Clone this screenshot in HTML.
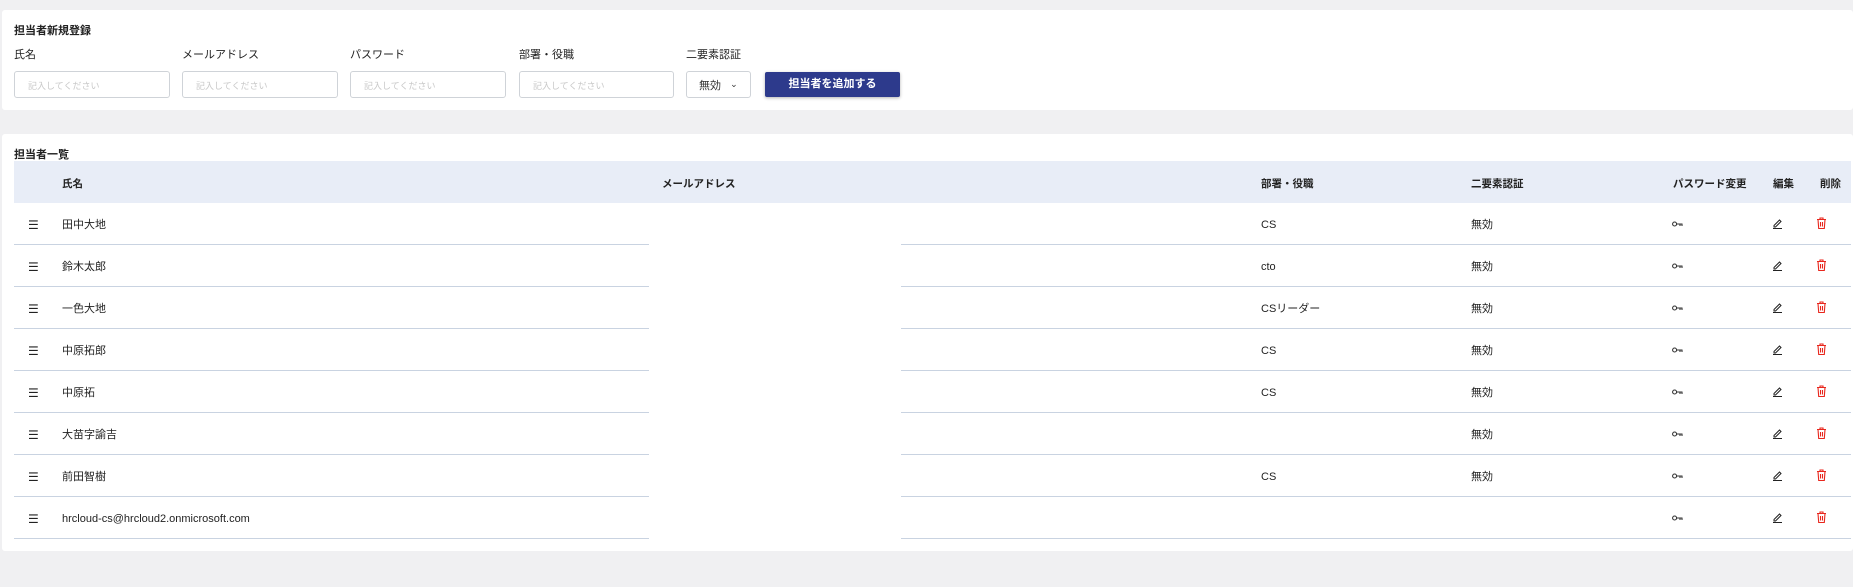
<!DOCTYPE html>
<html><head><meta charset="utf-8"><style>
*{box-sizing:border-box;margin:0;padding:0}
body{width:1853px;height:587px;background:#f0f0f2;font-family:"Liberation Sans","Noto Sans CJK JP",sans-serif;color:#222;font-size:11px;line-height:14px;position:relative;overflow:hidden}
.a{position:absolute;line-height:14px;white-space:nowrap}
.p{background:#fff;border-radius:3px}
.t{font-weight:bold;font-size:11px}
.in{border:1px solid #cfd3d8;border-radius:3px;height:27px;top:71px;color:#c8c8c8;font-size:9px;padding:7px 0 0 13px;background:#fff}
.lbl{top:48px;font-size:11px}
.hd{background:#e8edf7;left:14px;width:1837px;top:161px;height:42px}
.h{top:177px;font-weight:bold;font-size:10.5px}
.ln{height:1px;background:#c9d3e1}
.c{font-size:11px}
</style></head><body>
<div class="a p" style="left:2px;top:10px;width:1851px;height:100px"></div>
<div class="a t" style="left:14px;top:24px">担当者新規登録</div>
<div class="a lbl" style="left:14px">氏名</div>
<div class="a lbl" style="left:182px">メールアドレス</div>
<div class="a lbl" style="left:350px">パスワード</div>
<div class="a lbl" style="left:519px">部署・役職</div>
<div class="a lbl" style="left:686px">二要素認証</div>
<div class="a in" style="left:14px;width:156px">記入してください</div>
<div class="a in" style="left:182px;width:156px">記入してください</div>
<div class="a in" style="left:350px;width:156px">記入してください</div>
<div class="a in" style="left:519px;width:155px">記入してください</div>
<div class="a in" style="left:686px;width:65px;color:#333;font-size:11px;padding:7px 0 0 12px">無効 <span style="font-size:9px;margin-left:6px;position:relative;top:-2px">&#8964;</span></div>
<div class="a" style="left:765px;top:72px;width:135px;height:25px;background:#2d3a8c;border-radius:2px;color:#fff;font-weight:bold;text-align:center;line-height:25px;box-shadow:0 1px 3px rgba(0,0,0,.3)">担当者を追加する</div>

<div class="a p" style="left:2px;top:134px;width:1851px;height:417px"></div>
<div class="a t" style="left:14px;top:148px">担当者一覧</div>
<div class="a hd"></div>
<div class="a h" style="left:62px">氏名</div>
<div class="a h" style="left:662px">メールアドレス</div>
<div class="a h" style="left:1261px">部署・役職</div>
<div class="a h" style="left:1471px">二要素認証</div>
<div class="a h" style="left:1673px">パスワード変更</div>
<div class="a h" style="left:1773px">編集</div>
<div class="a h" style="left:1820px">削除</div>
<div id="rows"></div>
<script>
var d=[["田中大地","CS","無効"],["鈴木太郎","cto","無効"],["一色大地","CSリーダー","無効"],["中原拓郎","CS","無効"],["中原拓","CS","無効"],["大苗字諭吉","","無効"],["前田智樹","CS","無効"],["hrcloud-cs@hrcloud2.onmicrosoft.com","",""]];
var h="";
d.forEach(function(r,i){var y=203+i*42;var ty=y+15;
h+='<div class="a c" style="left:28px;top:'+ty+'px;font-size:12px">&#9776;</div>';
h+='<div class="a c" style="left:62px;top:'+ty+'px">'+r[0]+'</div>';
h+='<div class="a c" style="left:1261px;top:'+ty+'px">'+r[1]+'</div>';
h+='<div class="a c" style="left:1471px;top:'+ty+'px">'+r[2]+'</div>';
h+='<svg class="a" style="left:1672px;top:'+(y+18)+'px" width="11" height="7" viewBox="0 0 11 7"><circle cx="2.6" cy="3" r="2" fill="none" stroke="#333" stroke-width="1.1"/><path d="M4.6 3H10.5M8 3v2M10 3v2" stroke="#333" stroke-width="1.1"/></svg>';
h+='<svg class="a" style="left:1772px;top:'+(y+14)+'px" width="11" height="12" viewBox="0 0 11 12"><path d="M2 8.5L7.5 3l1.5 1.5L3.5 10H2z" fill="none" stroke="#222" stroke-width="1"/><path d="M1 11.5h9" stroke="#222" stroke-width="1"/></svg>';
h+='<svg class="a" style="left:1816px;top:'+(y+14)+'px" width="11" height="12" viewBox="0 0 11 12"><path d="M1 2.5h9M4 2.5V1h3v1.5M2 2.5l.7 9h5.6l.7-9M4.5 5v4.5M6.5 5v4.5" fill="none" stroke="#e8261c" stroke-width="1.1"/></svg>';
h+='<div class="a ln" style="left:14px;top:'+(y+41)+'px;width:635px"></div>';
h+='<div class="a ln" style="left:901px;top:'+(y+41)+'px;width:950px"></div>';
});
document.getElementById("rows").innerHTML=h;
</script>
</body></html>
